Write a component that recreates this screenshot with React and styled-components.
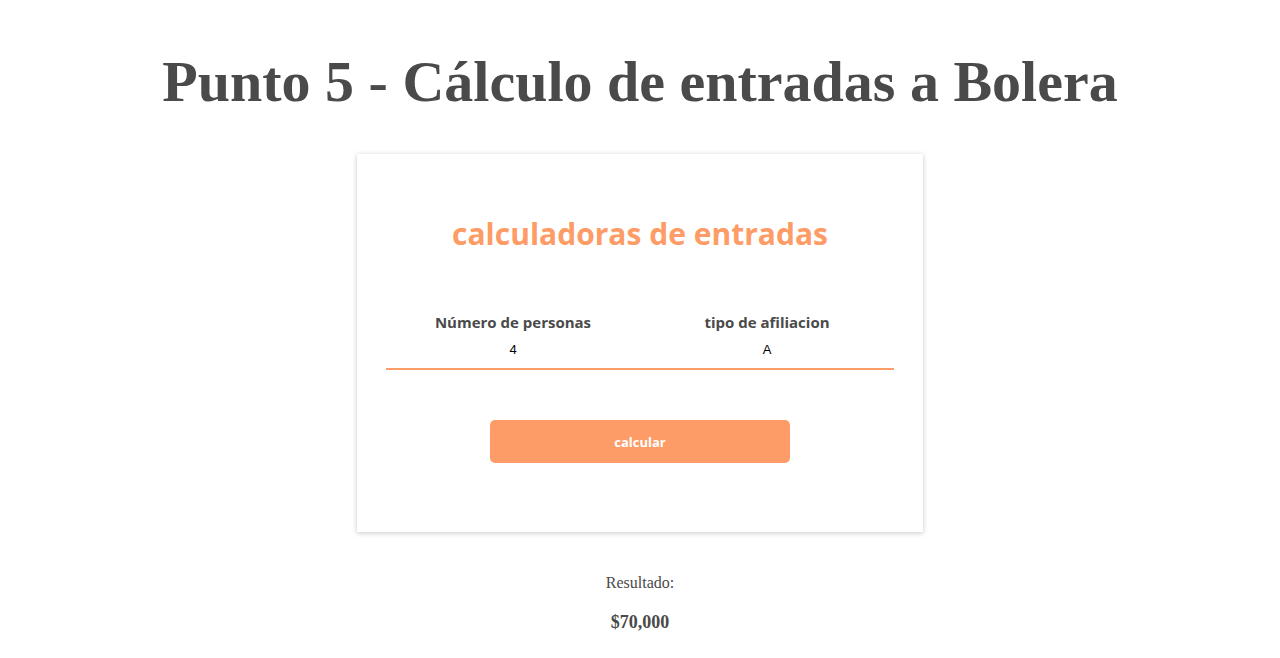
import React from 'react'
import styled, { createGlobalStyle } from 'styled-components'

const GlobalStyle = createGlobalStyle`
  body {
    margin: 0;
    background: #ffffff;
    font-family: "Liberation Serif", "Times New Roman", serif;
  }
`

function App() {
  const [personas, setPersonas] = React.useState('4')
  const [tipo, setTipo] = React.useState('A')

  return (
    <Page>
      <GlobalStyle />
      <Title>Punto 5 - Cálculo de entradas a Bolera</Title>
      <Card>
        <CardTitle>calculadoras de entradas</CardTitle>
        <Fields>
          <Field>
            <Label>Número de personas</Label>
            <Input value={personas} onChange={e => setPersonas(e.target.value)} />
          </Field>
          <Field>
            <Label>tipo de afiliacion</Label>
            <Input value={tipo} onChange={e => setTipo(e.target.value)} />
          </Field>
        </Fields>
        <Button>calcular</Button>
      </Card>
      <Result>
        <p>Resultado:</p>
        <strong>$70,000</strong>
      </Result>
    </Page>
  )
}

const Page = styled.div`
  display: flex;
  flex-direction: column;
  align-items: center;
  color: #4a4a4a;
`

const Title = styled.h1`
  margin: 48px 0 38px;
  font-size: 58px;
  line-height: 68px;
  font-weight: bold;
  color: #4a4a4a;
`

const Card = styled.div`
  width: 508px;
  padding: 62px 29px 69px;
  background: #fff;
  box-shadow: 0 1px 5px rgba(0, 0, 0, 0.22);
  display: flex;
  flex-direction: column;
  align-items: center;
`

const CardTitle = styled.h2`
  margin: 0 0 60px;
  font-family: "Open Sans", "Noto Sans", sans-serif;
  font-size: 30px;
  line-height: 36px;
  font-weight: 700;
  color: #fd9c66;
`

const Fields = styled.div`
  display: grid;
  grid-template-columns: 1fr 1fr;
  width: 100%;
`

const Field = styled.div`
  display: flex;
  flex-direction: column;
  align-items: center;
`

const Label = styled.label`
  font-family: "Open Sans", "Noto Sans", sans-serif;
  font-size: 15px;
  line-height: 20px;
  font-weight: 700;
  color: #4a4a4a;
`

const Input = styled.input`
  width: 100%;
  box-sizing: border-box;
  margin-top: 9px;
  padding: 1px 0 11px;
  border: none;
  border-bottom: 2px solid #fd9c66;
  outline: none;
  text-align: center;
  font-family: "Liberation Sans", Arial, sans-serif;
  font-size: 13px;
  color: #000;
  background: transparent;
`

const Button = styled.button`
  margin-top: 50px;
  width: 300px;
  height: 43px;
  border: none;
  border-radius: 5px;
  background: #fd9c66;
  color: #fff;
  font-family: "Open Sans", "Noto Sans", sans-serif;
  font-size: 13px;
  font-weight: 700;
  cursor: pointer;
`

const Result = styled.div`
  margin-top: 42px;
  display: flex;
  flex-direction: column;
  align-items: center;

  p {
    margin: 0 0 20px;
    font-size: 16px;
  }

  strong {
    font-size: 18px;
  }
`

export default App
